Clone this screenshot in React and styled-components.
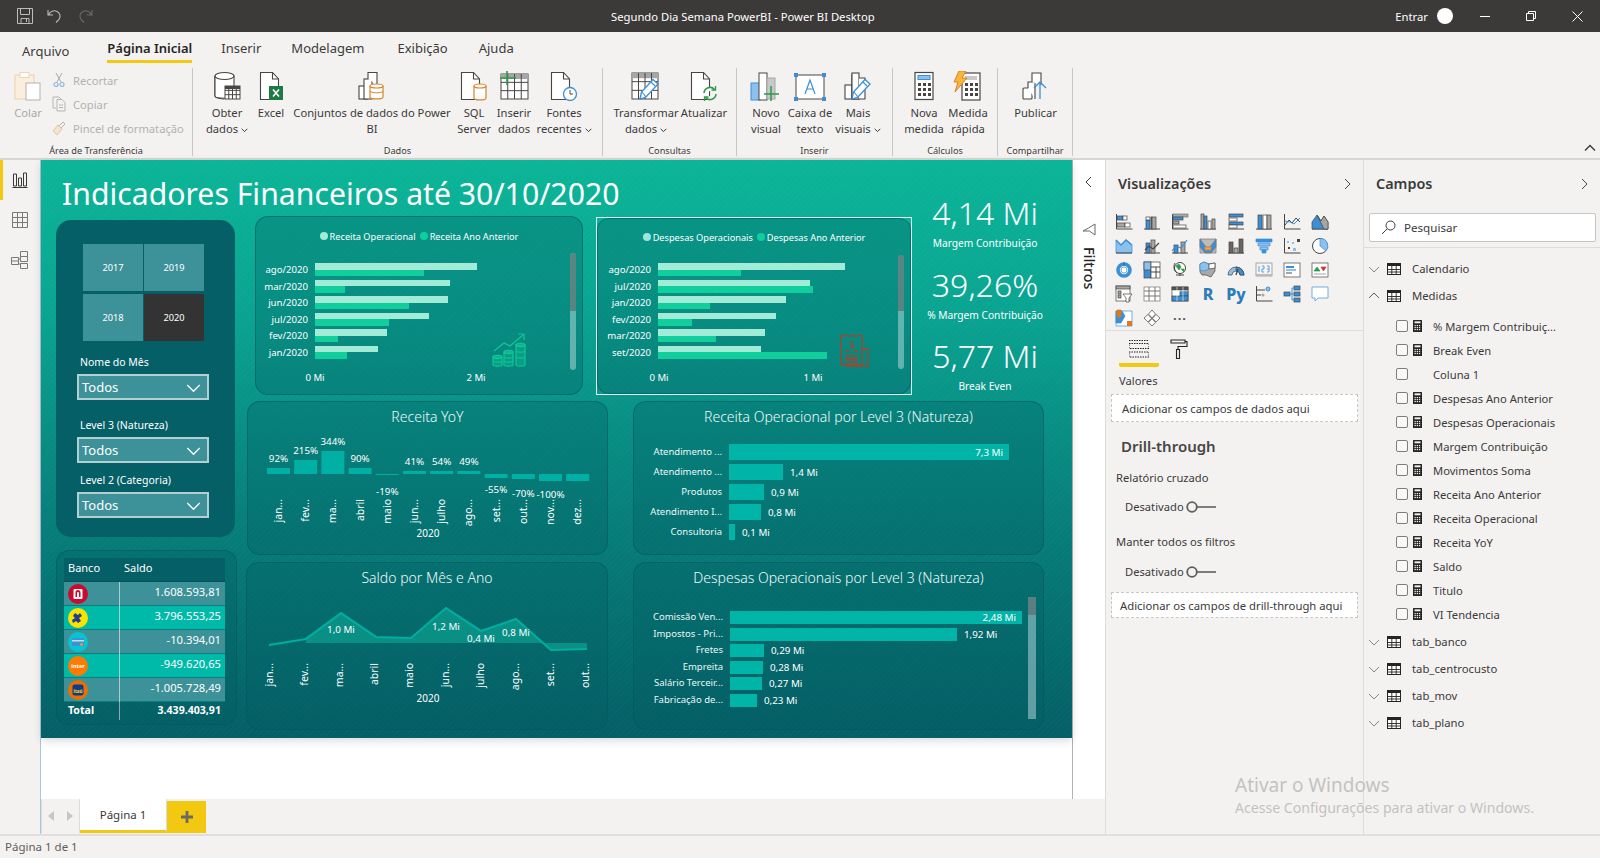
import React from 'react';
import styled, { createGlobalStyle } from 'styled-components';

const FONT = '"Noto Sans", "Open Sans", "Liberation Sans", sans-serif';

const Global = createGlobalStyle`
  html, body { margin: 0; padding: 0; background: #f3f2f1; }
  body { font-family: ${FONT}; overflow: hidden; }
  * { box-sizing: border-box; }
`;

const Page = styled.div`width:1600px;height:858px;display:flex;flex-direction:column;overflow:hidden;background:#f3f2f1;color:#252423;`;

/* ---------- title bar ---------- */
const TitleBar = styled.div`height:32px;flex:none;background:#3b3a39;color:#fff;display:flex;align-items:center;padding-left:17px;font-size:11.25px;`;
const QuickTools = styled.div`width:594px;display:flex;align-items:center;gap:14px;`;
const TitleText = styled.div`white-space:nowrap;`;
const TitleRight = styled.div`margin-left:auto;display:flex;align-items:center;`;
const Signin = styled.span`margin-right:9px;`;
const Avatar = styled.span`width:16px;height:16px;border-radius:50%;background:#fff;margin-right:9px;`;
const WinBtn = styled.span`width:46px;height:32px;display:flex;align-items:center;justify-content:center;`;

/* ---------- ribbon ---------- */
const Ribbon = styled.div`height:128px;flex:none;background:#f3f2f1;border-bottom:2px solid #d8d6d4;position:relative;`;
const TabRow = styled.div`height:36px;display:flex;padding-left:22px;font-size:13px;color:#3b3a39;`;
const RTab = styled.div`
  height:31px;line-height:${p=>p.$low?'38px':'32px'};white-space:nowrap;margin-right:${p=>p.$mr}px;
  ${p=>p.$active&&'font-weight:600;color:#252423;border-bottom:3px solid #f2c811;'}
`;
const GroupRow = styled.div`display:flex;height:88px;`;
const RGroup = styled.div`width:${p=>p.$w}px;flex:none;border-right:1px solid #c8c6c4;display:flex;flex-direction:column;padding-left:${p=>p.$pl||0}px;`;
const GroupBody = styled.div`height:77px;flex:none;display:flex;`;
const GroupLabel = styled.div`height:12px;line-height:12px;font-size:9.2px;text-align:center;color:#3b3a39;margin-left:${p=>-(p.$pl||0)}px;white-space:nowrap;`;
const RBtn = styled.div`width:${p=>p.$w}px;flex:none;display:flex;flex-direction:column;align-items:center;padding-top:3px;font-size:11.2px;line-height:16px;color:${p=>p.$off?'#a9a8a6':'#3b3a39'};text-align:center;`;
const RIcon = styled.div`height:30px;margin-bottom:4px;display:flex;justify-content:center;`;
const RLabel = styled.div`white-space:nowrap;`;
const SmallCol = styled.div`margin-left:9px;display:flex;flex-direction:column;`;
const SmallBtn = styled.div`height:24px;display:flex;align-items:center;gap:6px;font-size:11.2px;color:#b3b1af;white-space:nowrap;`;
const Caret = styled.svg`margin-left:3px;`;
const Collapse = styled.svg`position:absolute;right:4px;bottom:6px;`;

/* ---------- main ---------- */
const Main = styled.div`flex:1;display:flex;min-height:0;`;
const Rail = styled.div`width:41px;flex:none;background:#f3f2f1;border-right:1px solid #a9c4e4;display:flex;flex-direction:column;`;
const RailBtn = styled.div`height:40px;display:flex;align-items:center;justify-content:center;border-left:3px solid ${p=>p.$on?'#f2c811':'transparent'};padding-right:3px;`;
const Center = styled.div`width:1064px;flex:none;display:flex;flex-direction:column;`;
const ReportRow = styled.div`height:639px;display:flex;background:#fff;`;
const ReportCol = styled.div`width:1031px;flex:none;display:flex;flex-direction:column;`;
const Canvas = styled.div`
  height:578px;position:relative;color:#fff;overflow:hidden;box-shadow:0 3px 8px rgba(0,0,0,.14);
  background:
    repeating-linear-gradient(135deg,rgba(255,255,255,.018) 0 1px,transparent 1px 4px),
    linear-gradient(180deg,#0bb597 0%,#0aa592 25%,#077f7a 62%,#045f66 100%);
`;
const FilterPane = styled.div`width:33px;flex:none;border-left:1px solid #b4b2b0;background:#fff;display:flex;flex-direction:column;align-items:center;padding-top:16px;`;
const FilterWord = styled.div`writing-mode:vertical-rl;font-size:14.4px;font-weight:500;margin-top:10px;color:#252423;`;
const FilterFunnel = styled.svg`margin-top:35px;`;

const Visual = styled.div`position:absolute;left:${p=>p.$x-41}px;top:${p=>p.$y-160}px;width:${p=>p.$w}px;height:${p=>p.$h}px;`;
const Heading = styled.div`
  position:absolute;left:21px;top:11px;font-size:30.2px;line-height:46px;white-space:nowrap;font-weight:400;color:#fff;
`;
const Card = styled(Visual)`
  border-radius:13px;background:rgba(3,92,98,.32);border:1px solid rgba(3,88,95,.55);display:flex;flex-direction:column;
`;
const SelectFrame = styled(Visual)`border:1.5px solid #e4f4f1;`;
const SelectCard = styled.div`height:100%;border-radius:12px;background:rgba(3,92,98,.32);border:1px solid rgba(3,88,95,.55);position:relative;display:flex;flex-direction:column;`;
const CardTitle = styled.div`height:32px;flex:none;line-height:30px;text-align:center;font-size:14px;font-weight:300;color:#eefaf8;white-space:nowrap;`;
const Fill = styled.svg`display:block;flex:none;`;

/* slicer */
const SlicerPanel = styled(Visual)`background:#045f66;border-radius:15px;padding:24px 0 0 21px;`;
const Tiles = styled.div`display:grid;grid-template-columns:60px 60px;grid-auto-rows:47px;gap:3px 1px;margin-left:6px;margin-bottom:13px;`;
const Tile = styled.div`background:${p=>p.$on?'#333':'#3d9299'};color:#fff;display:flex;align-items:center;justify-content:center;font-size:9.2px;`;
const SlicerLabel = styled.div`font-size:10.5px;line-height:16px;color:#fff;margin:0 0 4px 3px;`;
const Drop = styled.div`width:132px;height:26px;border:2px solid #b5ced0;background:#3d9299;display:flex;align-items:center;justify-content:space-between;padding:0 6px 0 3px;font-size:13px;color:#fff;margin-bottom:${p=>p.$mb}px;`;

/* hbars */
const Legend = styled.div`height:14px;margin-top:${p=>p.$mt}px;flex:none;display:flex;justify-content:center;align-items:center;gap:4px;font-size:9.2px;color:#fff;white-space:nowrap;`;
const LegendItem = styled.span`display:flex;align-items:center;gap:2px;`;
const Dot = styled.i`width:8px;height:8px;border-radius:50%;background:${p=>p.$c};display:block;`;
const Rows = styled.div`margin-top:${p=>p.$mt}px;display:flex;flex-direction:column;gap:3.5px;`;
const DRow = styled.div`height:13px;display:flex;align-items:center;`;
const DLabel = styled.div`width:${p=>p.$w}px;text-align:right;font-size:9.6px;margin-right:7px;white-space:nowrap;flex:none;`;
const DBars = styled.div`display:flex;flex-direction:column;`;
const DBar = styled.div`height:6.5px;background:${p=>p.$c};`;
const Axis = styled.div`margin-top:${p=>p.$mt}px;padding-left:${p=>p.$pl}px;display:flex;font-size:9.6px;gap:${p=>p.$gap}px;`;
const AxisTick = styled.span`width:40px;text-align:center;`;
const Scroll = styled.div`position:absolute;left:${p=>p.$l}px;top:${p=>p.$t}px;width:${p=>p.$w||6}px;height:${p=>p.$h}px;border-radius:${p=>p.$r??3}px;background:rgba(190,220,220,.5);overflow:hidden;`;
const Thumb = styled.div`height:${p=>p.$h}px;background:rgba(90,115,118,.75);`;
const Corner = styled.div`position:absolute;left:${p=>p.$l}px;top:${p=>p.$t}px;`;

/* one-bar charts */
const BRows = styled.div`margin-top:${p=>p.$mt}px;display:flex;flex-direction:column;gap:${p=>p.$gap}px;`;
const BRow = styled.div`height:${p=>p.$h}px;display:flex;align-items:center;`;
const BLabel = styled.div`width:${p=>p.$w}px;flex:none;text-align:right;font-size:9.5px;margin-right:7px;padding-bottom:2px;white-space:nowrap;color:#e9f7f5;`;
const Bar = styled.div`height:100%;background:#00b5a8;display:flex;align-items:center;justify-content:flex-end;padding-right:6px;font-size:9.8px;white-space:nowrap;flex:none;`;
const BVal = styled.span`font-size:9.8px;margin-left:7px;white-space:nowrap;`;

/* KPI */
const KpiCol = styled(Visual)`display:flex;flex-direction:column;align-items:center;`;
const KpiValue = styled.div`font-size:32px;font-weight:300;line-height:45px;white-space:nowrap;margin:${p=>p.$mt}px 0 1px;`;
const KpiLabel = styled.div`font-size:10.2px;line-height:14px;white-space:nowrap;`;

/* bank table */
const BankCard = styled(Card)`padding:7px 0 0 7px;`;
const BankTable = styled.div`width:161px;font-size:11.2px;`;
const BankHead = styled.div`height:24px;background:#045f66;display:grid;grid-template-columns:56px 1fr;align-items:center;padding:0 0 5px 4px;font-size:11px;border-bottom:1px solid #03525a;`;
const BankRow = styled.div`height:24px;display:grid;grid-template-columns:56px 1fr;background:${p=>p.$alt?'#00baa9':'#3d9299'};border-bottom:1px solid #0a7d7e;`;
const LogoCell = styled.div`border-right:1px solid #a9cccd;display:flex;align-items:center;padding-left:4px;`;
const Amount = styled.div`text-align:right;padding:0 4px 5px 0;line-height:19px;`;
const BankTotal = styled.div`height:18px;display:grid;grid-template-columns:56px 1fr;font-weight:700;font-size:10.6px;line-height:17px;`;
const TotalName = styled.div`padding-left:4px;border-right:1px solid #8ab;`;
const TotalVal = styled.div`text-align:right;padding-right:4px;`;

/* tab bar */
const TabBar = styled.div`height:35px;flex:none;display:flex;background:#f3f2f1;align-items:flex-start;`;
const Arrows = styled.div`width:39px;height:34px;border-left:1px solid #dedcda;border-right:1px solid #dedcda;display:flex;align-items:center;justify-content:space-between;padding:0 6px;`;
const PageTab = styled.div`width:87px;height:34px;background:#fff;border-bottom:3px solid #f2c811;border-right:1px solid #dedcda;display:flex;align-items:center;justify-content:center;font-size:11.5px;color:#3b3a39;`;
const AddTab = styled.div`width:39px;height:32px;margin-top:2px;background:#f2c811;display:flex;align-items:center;justify-content:center;`;

/* viz pane */
const VizPane = styled.div`width:258px;flex:none;border-left:1px solid #dedcda;display:flex;flex-direction:column;position:relative;`;
const PaneHead = styled.div`height:50px;flex:none;display:flex;align-items:center;justify-content:space-between;padding:0 ${p=>p.$pr}px 3px ${p=>p.$pl}px;font-size:14.4px;font-weight:600;color:#3b3a39;`;
const VizGrid = styled.div`display:grid;grid-template-columns:repeat(8,28px);grid-auto-rows:24px;padding-left:4px;height:121px;border-bottom:1px solid #dedcda;flex:none;`;
const VizCell = styled.div`display:flex;align-items:center;justify-content:center;`;
const More = styled.div`color:#555;font-size:13px;letter-spacing:1px;line-height:14px;font-weight:700;`;
const Glyph = styled.div`color:#2b7cb9;font-weight:800;font-size:16px;line-height:18px;`;
const WellTabs = styled.div`height:36px;display:flex;padding-left:13px;flex:none;`;
const WellTab = styled.div`width:40px;height:36px;margin-right:${p=>p.$mr||0}px;display:flex;justify-content:center;padding-top:8px;border-bottom:${p=>p.$on?'4px solid #f2c811':'none'};border-radius:0 0 2px 2px;`;
const ValoresLabel = styled.div`font-size:11.2px;line-height:16px;margin:6px 0 5px 13px;color:#3b3a39;`;
const DropZone = styled.div`margin-left:5px;width:247px;height:${p=>p.$h}px;background:#fff;border:1px dashed #c8c6c4;display:flex;align-items:center;padding-left:${p=>p.$pl}px;font-size:11.3px;color:#3b3a39;white-space:nowrap;`;
const DrillTitle = styled.div`font-size:15px;font-weight:600;line-height:20px;margin:14px 0 14px 15px;color:#484644;`;
const SmallHead = styled.div`font-size:11.2px;line-height:16px;margin-left:10px;color:#3b3a39;`;
const ToggleRow = styled.div`display:flex;align-items:center;gap:2px;font-size:11.2px;line-height:16px;margin:${p=>p.$mt}px 0 ${p=>p.$mb}px 19px;color:#3b3a39;`;

/* fields */
const FieldsPane = styled.div`flex:1;border-left:1px solid #dedcda;display:flex;flex-direction:column;position:relative;`;
const SearchBox = styled.div`margin:3px 4px 0 5px;height:29px;background:#fff;border:1px solid #c8c6c4;border-radius:2px;display:flex;align-items:center;padding-left:11px;gap:8px;font-size:11.6px;color:#3b3a39;flex:none;`;
const PaneRule = styled.div`height:1px;background:#dedcda;margin-top:5px;flex:none;`;
const FieldList = styled.div`padding-top:7px;`;
const TableRow = styled.div`height:27px;display:flex;align-items:center;font-size:11.3px;color:#3b3a39;padding-left:4px;`;
const RowName = styled.span`margin-left:11px;`;
const Measures = styled.div`margin:5px 0 2px;`;
const MeasureRow = styled.div`height:24px;display:flex;align-items:center;padding-left:32px;font-size:11.2px;color:#3b3a39;white-space:nowrap;`;
const Check = styled.i`width:12px;height:12px;border:1px solid #7f7d7b;border-radius:2px;background:#f8f8f8;display:block;flex:none;`;
const CalcSlot = styled.span`width:10px;margin:0 10px 0 5px;display:block;flex:none;`;

const Watermark = styled.div`position:absolute;left:-129px;top:612px;color:#c3c2c0;white-space:nowrap;font-size:14.1px;line-height:18px;`;
const WatermarkBig = styled.div`font-size:19px;line-height:27px;`;

const Status = styled.div`height:24px;flex:none;border-top:2px solid #e1dfdd;font-size:11.5px;line-height:22px;padding-left:5px;color:#605e5c;`;

/* ---------- icons ---------- */
const K = '#484644', BL = '#3a8fd6', BLL = '#8dc0ee', GR = '#a6a6a6', OR = '#d9822b', GN = '#2c9a4b';
const Ic = ({ w = 30, h = 30, vb, children }) => <svg width={w} height={h} viewBox={vb || `0 0 ${w} ${h}`} fill="none" style={{display:'block'}}>{children}</svg>;
const Doc = ({ x = 0 }) => <g stroke={K} strokeWidth="1.1" fill="#fff"><path d={`M${x+4.5} 1.5h12l6 6.5v20.5h-18z`}/><path d={`M${x+16.5} 1.5v6.5h6`} fill="none"/></g>;
const Cyl = ({ x, y, w, h, c }) => <g stroke={c} strokeWidth="1.2" fill="#fff"><path d={`M${x} ${y+2}v${h-4}c0 2.6 ${w} 2.6 ${w} 0v-${h-4}`}/><ellipse cx={x+w/2} cy={y+2} rx={w/2} ry="2"/></g>;
const Tbl = ({ x, y, w, h, c = K, head }) => {
  const v=[1,2,3].map(i=>x+i*w/4), s=[1,2].map(i=>y+i*h/3);
  return <g stroke={c} strokeWidth="1" fill="none"><rect x={x} y={y} width={w} height={h} fill="#fff"/>{head&&<rect x={x} y={y} width={w} height={h/5} fill={GR} stroke="none"/>}{v.map(a=><path key={a} d={`M${a} ${y}v${h}`}/>)}{s.map(a=><path key={a} d={`M${x} ${a}h${w}`}/>)}</g>;
};
const Bars3 = () => <g stroke={K} strokeWidth="1.1" fill="#fff"><rect x="3" y="14" width="7" height="14"/><rect x="10" y="8" width="7" height="20"/><path d="M17 3.5h-7v5"/><rect x="10" y="2" width="7" height="26"/><path d="M17 7h6v21h-6"/></g>;
const Pencil = () => <g><path d="M10 28l1.5-7L23 8.5l5 4.5L16 26z" fill="#fff" stroke={BL} strokeWidth="1.3"/><path d="M12 21l4 5M21 11l4 4" stroke={BL} strokeWidth="1.1"/></g>;

const RibbonIcons = {
  colar: <Ic><rect x="2" y="4" width="19" height="24" fill="#fbeedd" stroke="#eed5b3" strokeWidth="1.2"/><rect x="7" y="1.5" width="9" height="5" fill="#fff" stroke="#eed5b3"/><rect x="13" y="12" width="14" height="17" fill="#fff" stroke="#b9b8b6" strokeWidth="1.1"/></Ic>,
  obter: <Ic><path d="M3 5v20c0 2 7 3 9 3" stroke={K} strokeWidth="1.1" fill="#fff"/><path d="M3 5v20c0 3 18 3 19 0V5z" fill="#fff" stroke={K} strokeWidth="1.1"/><ellipse cx="12.5" cy="5" rx="9.5" ry="3.5" fill="#fff" stroke={K} strokeWidth="1.1"/><Tbl x={13} y={15} w={15} h={13}/><rect x="13" y="15" width="15" height="3" fill={K}/></Ic>,
  excel: <Ic w={30}><Doc/><rect x="13" y="15" width="14" height="14" fill="#1e7a45"/><path d="M17 18.5l6 7M23 18.5l-6 7" stroke="#fff" strokeWidth="1.6"/></Ic>,
  conj: <Ic w={30}><g stroke={K} strokeWidth="1.1" fill="#fff"><rect x="2" y="15" width="8" height="13"/><rect x="7" y="8" width="8" height="20"/><path d="M11 8V1.5h9v12"/></g><Cyl x={13} y={13} w={13} h={15} c={OR}/><path d="M13 20c0 2.4 13 2.4 13 0" stroke={OR} strokeWidth="1"/></Ic>,
  sql: <Ic w={30}><Doc x={-2}/><Cyl x={15} y={13} w={12} h={16} c={OR}/></Ic>,
  inserir: <Ic w={32}><Tbl x={3} y={3} w={27} h={25} head/><path d="M9 0v14M2 7h16" stroke={GN} strokeWidth="1.6"/></Ic>,
  fontes: <Ic w={30}><Doc x={-2}/><circle cx="21" cy="23" r="6.5" fill="#fff" stroke={BL} strokeWidth="1.3"/><path d="M21 19v4h3" stroke={K}/></Ic>,
  transf: <Ic w={32}><Tbl x={2} y={2} w={26} h={26} head/><Pencil/></Ic>,
  atual: <Ic w={30}><Doc x={-2}/><path d="M15 22a6 6 0 0 1 10.5-3.5M27 23a6 6 0 0 1-10.5 3.5" stroke={GN} strokeWidth="1.6" fill="#fff"/><path d="M26.5 15v4h-4M15.5 30v-4h4" stroke={GN} strokeWidth="1.3"/></Ic>,
  novo: <Ic w={32}><rect x="1" y="12" width="9" height="17" fill={BLL} stroke={BL}/><rect x="9" y="2" width="8" height="27" fill="#fff" stroke={K}/><rect x="17" y="7" width="8" height="21" fill="#c8c8c8" stroke={GR}/><path d="M21 15v15M14 23h15" stroke={GN} strokeWidth="1.5"/></Ic>,
  caixa: <Ic w={32}><rect x="2" y="4" width="28" height="24" fill="#fff" stroke={K}/><g fill={BL}><rect x="0" y="2" width="4" height="4"/><rect x="28" y="2" width="4" height="4"/><rect x="0" y="26" width="4" height="4"/><rect x="28" y="26" width="4" height="4"/></g><path d="M11 23l5-14 5 14M12.8 18h6.4" stroke={BL} strokeWidth="1.2"/></Ic>,
  mais: <Ic w={32}><Bars3/><Pencil/></Ic>,
  calc: <Ic w={22}><rect x="2" y="1.5" width="18" height="27" fill="#fff" stroke={K} strokeWidth="1.2"/><rect x="5" y="4.5" width="12" height="4" fill={BLL} stroke={BL}/><g fill={K}>{[12,17,22].flatMap(y=>[5,10,15].map(x=><rect key={x+'-'+y} x={x} y={y} width="3" height="3"/>))}</g></Ic>,
  rapida: <Ic w={32}><rect x="10" y="2" width="18" height="27" fill="#fff" stroke={K} strokeWidth="1.2"/><rect x="13" y="5" width="12" height="4" fill="#c8c8c8"/><g fill={K}>{[12,17,22].flatMap(y=>[13,18,23].map(x=><rect key={x+'-'+y} x={x} y={y} width="3" height="3"/>))}</g><path d="M7 0h7l-4 7h5L3 21l3-10H2z" fill="#f6b73c" stroke={OR}/></Ic>,
  pub: <Ic w={30}><g stroke={K} strokeWidth="1.1" fill="#fff"><rect x="2" y="17" width="9" height="11" rx="1"/><path d="M7 17v-6h7v17"/><path d="M11 11V2h9v12"/></g><path d="M19 28V11M13 17l6-6 6 6" stroke={BL} strokeWidth="1.3"/></Ic>,
};

const Chev = ({ d = 'r', s = 12, c = '#484644' }) => {
  const p = { r:'M4 1l5 5-5 5', l:'M8 1L3 6l5 5', d:'M1 4l5 5 5-5', u:'M1 8l5-5 5 5' }[d];
  return <svg width={s} height={s} viewBox="0 0 12 12" fill="none" style={{display:'block',flex:'none'}}><path d={p} stroke={c} strokeWidth="1"/></svg>;
};
const Small = ({ children }) => <svg width="15" height="16" viewBox="0 0 15 16" fill="none" style={{display:'block',flex:'none'}}>{children}</svg>;
const DownCaret = () => <Caret width="7" height="5" viewBox="0 0 7 5" fill="none"><path d="M.7.8l2.8 2.8L6.3.8" stroke="#3b3a39" strokeWidth="1"/></Caret>;

/* 18x18 visual pane glyphs */
const R = (x,y,w,h,f=BL,s=K) => <rect key={`${x}${y}${w}${h}${f}`} x={x} y={y} width={w} height={h} fill={f} stroke={s} strokeWidth=".7"/>;
const AX = <path key="ax" d="M1.5 1v15h16" stroke={K} strokeWidth="1" fill="none"/>;
const BASE = <path key="bs" d="M1 16h16" stroke={K} strokeWidth="1" fill="none"/>;
const LN = (d,c=K,w=1) => <path key={d+c} d={d} stroke={c} strokeWidth={w} fill="none"/>;
const P = (d,f=BL,s=K) => <path key={d+f} d={d} fill={f} stroke={s} strokeWidth=".7"/>;
const VIZ = [
  [AX,R(2,3,6,4),R(8,3,4,4,'#fff'),R(2,10,8,4,GR),R(10,10,5,4,'#fff')],
  [BASE,R(3,7,4,9),R(8,4,1,12,BL),R(9,4,4,12,GR),R(3,4,4,3,'#fff')],
  [AX,R(2,1,15,3,GR,'#777'),R(2,4,10,3,BL),R(2,8,6,3,GR),R(2,12,13,3,'#fff')],
  [BASE,R(2,1,3,15,GR),R(5,3,3,13,BL),R(9,8,3,8,'#fff'),R(13,6,3,10,GR)],
  [BASE,R(2,1,14,3,BL),R(2,5,8,3,'#fff'),R(2,9,14,3,BL),R(2,12,8,3,'#fff')],
  [BASE,R(3,2,4,14),R(8,2,4,14,'#fff'),R(12,2,4,14,GR)],
  [AX,LN('M2 12l4-5 3 3 4-5 4 4',K),LN('M2 8l5 1 4 2 6-6',BL)],
  [BASE,P('M1 16V9l5-7 4 6 3-5 4 6v7z',BL),P('M6 2l4 6 3-5 4 6v7h-4z',GR)],
  [P('M1 3l5 5 5-5 6 5v8H1z',BLL,BL),LN('M1 3l5 5 5-5 6 5',BL,1.4),BASE],
  [BASE,R(3,6,4,10),R(8,3,4,13,GR),LN('M2 13l4-4 4 3 6-6',K,1.2)],
  [BASE,R(3,8,4,8),R(10,5,4,11,GR),LN('M1 14l4-5 5 2 6-8',BL,1.2)],
  [P('M1 2h16v14H1z','#bcbcbc','#777'),P('M1 2l6 8h4l6-8v8l-5 6H6l-5-6z',BL,'#777'),R(6,10,6,3,'#f3a13c','#d9822b')],
  [BASE,R(2,5,4,11,'#666'),R(7,11,4,5,GR),R(12,2,4,14,'#666')],
  [P('M1 2h16v3H1z',BL,BL),P('M3 6h12v3H3z',BLL,BL),P('M5 10h8v3H5z',BLL,BL),P('M7 13h4v3H7z',BL,BL)],
  [AX,R(5,10,2,2,K,'none'),R(9,5,2,2,BLL,'none'),R(10,11,3,3,BLL,'none'),R(14,2,3,3,K,'none'),R(4,4,2,2,BLL,'none')],
  [<circle key="c" cx="9" cy="9" r="7.5" fill="#fff" stroke={K} strokeWidth="1"/>,P('M9 9V1.5A7.5 7.5 0 0 1 15 14z',BLL,BL)],
  [<circle key="c" cx="9" cy="9" r="6" fill="none" stroke={BL} strokeWidth="3.6"/>,LN('M9 1v4',K,.7),<circle key="d" cx="9" cy="9" r="3" fill="#fff" stroke={BL} strokeWidth=".7"/>],
  [R(1,1,7,16),R(1,1,7,8,BLL),R(8,1,9,16,'#fff'),LN('M8 6h9M13 6v11M8 11h9')],
  [<circle key="g" cx="9" cy="7" r="5.5" fill="#fff" stroke={K} strokeWidth="1"/>,P('M5 5l3-2 2 3-2 3zM10 8l3 0 0 3z',GN,GN),LN('M5 14h8M9 12v3M4 2c-2 4-1 8 2 10',K)],
  [P('M1 3l4-2 5 2 6-1v8l-4 6-5-2-4 0L1 11z','#a8a8a8',K),P('M1 3l4-2 5 2v5l-5 2-4-1z',BLL,BL),P('M10 3l6-1v5l-6 1z','#fff',K)],
  [P('M1 14a8 8 0 0 1 16 0h-4a4 4 0 0 0-8 0z',BLL,K),P('M9 6a8 8 0 0 1 8 8h-4a4 4 0 0 0-4-4z',BL,K),LN('M9 14l2-6',K,1.3)],
  [R(1,2,16,13,'#f4f4f4','#888'),<rect key="b" x="1" y="13" width="16" height="2" fill="#bbb"/>,LN('M4 5v6M7 5h2v3H7v3h2M12 5h2v6h-2M12 8h2',BL,.8)],
  [R(1,2,16,14,'#fff',K),R(3,5,8,2,BL,'none'),R(3,8,10,2,BLL,'none'),R(3,11,6,2,GR,'none')],
  [R(1,2,16,14,'#fff',K),P('M3 10l3-4 3 4z',GN,GN),P('M10 6h5l-2.5 4z','#d13438','#d13438'),LN('M3 13h12',GR,1)],
  [R(1,1,14,15,'#fff',K),R(1,1,14,3,GR,K),R(3,6,3,3,GR,K),R(3,10,3,3,GR,K),P('M8 9h9l-3 4v4h-3v-4z','#fff',K)],
  [R(1,2,16,14,'#fff','#777'),LN('M1 6h16M1 11h16M6 2v14M12 2v14','#777')],
  [R(1,2,16,14,'#fff','#444'),R(1,2,16,3,'#555','#444'),R(9,6,8,5),R(1,11,16,5),LN('M1 6h16M6 2v14M12 2v14','#fff',.6)],
  null, null,
  [AX,LN('M2 5h8',K,1),<circle key="a" cx="13" cy="4" r="2" fill={BLL} stroke={BL}/>,LN('M2 10h4',K,1),<circle key="b" cx="8" cy="10" r="1.5" fill={GR}/>],
  [R(1,7,6,4),R(11,1,6,4),R(11,7,6,4),R(11,13,6,4),LN('M7 9h4M9 3v12M9 3h2M9 15h2',BL,1)],
  [P('M1 2h16v11H7l-3 3v-3H1z','#fff',BL)],
  [P('M1 2h16v15H1z','#fff',BL),P('M1 2h6l3 5-4 7H1z',BL,BL),P('M2 1h4v6l-2 2-2-2z','#e0791d','#e0791d'),R(12,12,5,5,'#e0791d','none')],
  [P('M9 1l3.5 4L9 9 5.5 5z','#fff',K),P('M5 5.5L8.5 9.3 5 13 1 9z','#fff',K),P('M13 5.5l4 3.5-4 4-3.5-3.7z','#fff',K),P('M9 9.7l3.5 3.7L9 17l-3.5-3.6z','#fff',K)],
];
const VizIcon = ({ i }) => {
  if (i === 27) return <Glyph>R</Glyph>;
  if (i === 28) return <Glyph>Py</Glyph>;
  return <svg width="18" height="18" viewBox="0 0 18 18">{VIZ[i]}</svg>;
};

const TableGlyph = () => <svg width="14" height="12" viewBox="0 0 14 12" style={{display:'block',flex:'none',marginLeft:7}}><rect x=".5" y=".5" width="13" height="11" fill="#fff" stroke="#252423"/><rect x="0" y="0" width="14" height="3" fill="#252423"/><path d="M4.8 0v12M9.2 0v12M0 6.5h14M0 9h14" stroke="#252423" strokeWidth=".9"/></svg>;
const CalcGlyph = () => <svg width="9" height="12" viewBox="0 0 9 12" style={{display:'block'}}><rect width="9" height="12" rx=".5" fill="#252423"/><rect x="1.5" y="1.3" width="6" height="2" fill="#eee"/><g fill="#eee">{[5,7,9].flatMap(y=>[1.5,3.7,5.9].map(x=><rect key={x+'_'+y} x={x} y={y} width="1.3" height="1.2"/>))}</g></svg>;
const Toggle = () => <svg width="32" height="12" viewBox="0 0 32 12"><circle cx="6" cy="6" r="4.8" fill="none" stroke="#605e5c" strokeWidth="1.8"/><path d="M11 6h19" stroke="#605e5c" strokeWidth="1.6"/></svg>;

const CoinIcon = () => <svg width="34" height="34" viewBox="0 0 34 34" fill="none" stroke="#0fc796" strokeWidth="1.2"><path d="M2 18L12 10l6 3L31 2M26 1h6v6"/><g fill="rgba(15,199,150,.35)"><path d="M1 24v8c0 1.5 9 1.5 9 0v-8zM12 19v13c0 1.5 9 1.5 9 0V19zM24 12v20c0 1.5 9 1.5 9 0V12z"/><ellipse cx="5.5" cy="24" rx="4.5" ry="1.6"/><ellipse cx="16.5" cy="19" rx="4.5" ry="1.6"/><ellipse cx="28.5" cy="12" rx="4.5" ry="1.6"/></g><path d="M1 28c0 1.5 9 1.5 9 0M12 24c0 1.5 9 1.5 9 0M12 28c0 1.5 9 1.5 9 0M24 18c0 1.5 9 1.5 9 0M24 24c0 1.5 9 1.5 9 0"/></svg>;
const ReceiptIcon = () => <svg width="30" height="34" viewBox="0 0 30 34" fill="none" stroke="#a9432a" strokeWidth="1.3"><path d="M1 32V2l3 1.5L7 2l3 1.5L13 2l3 1.5L19 2l3 1v29z"/><path d="M22 16h6v17H7v-1M5 18h4M14 18h4M5 23h13M5 26h13M5 29h13"/><path d="M14 10c-2-2-4-1-4 .5s4 1.500 4 3-2.500 2-4 .5M12 7.500v10" strokeWidth="1"/></svg>;

const bankLogos = [
  <svg key="a" width="20" height="20" viewBox="0 0 20 20"><circle cx="10" cy="10" r="10" fill="#cc092f"/><rect x="5.500" y="5" width="9" height="10" rx="1" fill="#fff"/><path d="M7.500 13V8.500a2.500 2.500 0 0 1 5 0V13h-1.500V9a1 1 0 0 0-2 0v4z" fill="#cc092f"/></svg>,
  <svg key="b" width="20" height="20" viewBox="0 0 20 20"><circle cx="10" cy="10" r="10" fill="#fbe300"/><path d="M7 5l3 2 2-2 2 3-3 2 2 3-3 2-2-2-3 2-1-3 3-2-2-2z" fill="#20408f"/></svg>,
  <svg key="c" width="20" height="20" viewBox="0 0 20 20"><circle cx="10" cy="10" r="10" fill="#07c4d0"/><rect x="4" y="6" width="12" height="8" rx="1" fill="#3f90d6"/><rect x="4" y="8" width="12" height="1.500" fill="#bfe3f5"/><rect x="12" y="11.500" width="3" height="2" fill="#f29b3a"/></svg>,
  <svg key="d" width="20" height="20" viewBox="0 0 20 20"><circle cx="10" cy="10" r="10" fill="#ff7a00"/><text x="10" y="12" textAnchor="middle" fontSize="5.500" fill="#fff" fontFamily={FONT} fontWeight="700">inter</text></svg>,
  <svg key="e" width="20" height="20" viewBox="0 0 20 20"><circle cx="10" cy="10" r="10" fill="#ec7000"/><rect x="4.500" y="4.500" width="11" height="11" rx="2" fill="#123a8a"/><text x="10" y="13" textAnchor="middle" fontSize="4.500" fill="#fbe300" fontFamily={FONT} fontWeight="700">itaú</text></svg>,
];

/* ---------- data ---------- */
const LIGHT = '#a2ecd7', DARK = '#10cf9c', LIGHT2 = '#9be5dc';
const chart1 = [['ago/2020',162,109],['mar/2020',135,30],['jun/2020',133,94],['jul/2020',114,74],['fev/2020',72,23],['jan/2020',63,32]];
const chart2 = [['ago/2020',187,83],['jul/2020',152,155],['jan/2020',128,52],['fev/2020',118,34],['mar/2020',107,58],['set/2020',103,169]];
const natureza = [['Atendimento ...',280,'7,3 Mi',true],['Atendimento ...',54,'1,4 Mi'],['Produtos',35,'0,9 Mi'],['Atendimento I...',32,'0,8 Mi'],['Consultoria',2,'0,1 Mi']];
const despesas = [['Comissão Ven...',292,'2,48 Mi',true],['Impostos - Pri...',227,'1,92 Mi'],['Fretes',34,'0,29 Mi'],['Empreita',33,'0,28 Mi'],['Salário Terceir...',32,'0,27 Mi'],['Fabricação de...',27,'0,23 Mi']];
const banks = ['1.608.593,81','3.796.553,25','-10.394,01','-949.620,65','-1.005.728,49'];
const fields = ['% Margem Contribuiç...','Break Even','Coluna 1','Despesas Ano Anterior','Despesas Operacionais','Margem Contribuição','Movimentos Soma','Receita Ano Anterior','Receita Operacional','Receita YoY','Saldo','Titulo','VI Tendencia'];
const yoy = [['jan...',6,'92%',-1],['fev...',14,'215%',-1],['ma...',23,'344%',-1],['abril',6,'90%',-1],['maio',1,'-19%',14],['jun...',3,'41%',-1],['julho',3,'54%',-1],['ago...',3,'49%',-1],['set...',4,'-55%',12],['out...',5,'-70%',16],['nov...',7,'-100%',17],['dez...',7,'',0]];
const linePts = [[269,645],[306,639],[341,613],[376,637],[411,638],[446,608],[481,631],[516,619],[551,650],[587,649]];
const lineLabels = ['jan...','fev...','ma...','abril','maio','jun...','julho','ago...','set...','out...'];

const TxtProps = { fill:'#fff', fontFamily:FONT };

const DoubleBars = ({ rows, labelW, mt }) => (
  <Rows $mt={mt}>
    {rows.map(([n,a,b])=>(
      <DRow key={n}>
        <DLabel $w={labelW}>{n}</DLabel>
        <DBars><DBar style={{width:a}} $c={LIGHT}/><DBar style={{width:b}} $c={DARK}/></DBars>
      </DRow>
    ))}
  </Rows>
);
const SingleBars = ({ rows, labelW, h, gap, mt }) => (
  <BRows $mt={mt} $gap={gap}>
    {rows.map(([n,w,v,inside],i)=>(
      <BRow key={n+i} $h={h}>
        <BLabel $w={labelW}>{n}</BLabel>
        <Bar style={{width:w}}>{inside&&v}</Bar>
        {!inside&&<BVal>{v}</BVal>}
      </BRow>
    ))}
  </BRows>
);

export default function App(){
  return (
    <Page>
      <Global/>
      <TitleBar>
        <QuickTools>
          <svg width="16" height="16" viewBox="0 0 16 16" fill="none" stroke="#bdbcbb"><path d="M.5.5h15v15H.5zM3.500.5v6h9v-6M4 15.500v-5h8v5M9.500 11v3"/></svg>
          <svg width="16" height="16" viewBox="0 0 16 16" fill="none" stroke="#bdbcbb" strokeWidth="1.1"><path d="M1 2v5h5M1.500 7C3 3 7 2 10 3.500s4 5 2 8l-3 3"/></svg>
          <svg width="16" height="16" viewBox="0 0 16 16" fill="none" stroke="#6b6a69" strokeWidth="1.1"><path d="M15 2v5h-5M14.500 7C13 3 9 2 6 3.500s-4 5-2 8l3 3"/></svg>
        </QuickTools>
        <TitleText>Segundo Dia Semana PowerBI - Power BI Desktop</TitleText>
        <TitleRight>
          <Signin>Entrar</Signin><Avatar/>
          <WinBtn><svg width="10" height="10"><path d="M0 5.500h10" stroke="#fff"/></svg></WinBtn>
          <WinBtn><svg width="10" height="10" fill="none" stroke="#fff"><path d="M.5 2.500h7v7h-7zM2.500 2.500v-2h7v7h-2"/></svg></WinBtn>
          <WinBtn><svg width="11" height="11" stroke="#fff"><path d="M.5.5l10 10M10.500.5l-10 10"/></svg></WinBtn>
        </TitleRight>
      </TitleBar>

      <Ribbon>
        <TabRow>
          <RTab $low $mr={38}>Arquivo</RTab>
          <RTab $active $mr={29}>Página Inicial</RTab>
          <RTab $mr={30}>Inserir</RTab>
          <RTab $mr={33}>Modelagem</RTab>
          <RTab $mr={31}>Exibição</RTab>
          <RTab>Ajuda</RTab>
        </TabRow>
        <GroupRow>
          <RGroup $w={193} $pl={13}>
            <GroupBody>
              <RBtn $w={30} $off><RIcon>{RibbonIcons.colar}</RIcon><RLabel>Colar</RLabel></RBtn>
              <SmallCol>
                <SmallBtn><Small><path d="M4 1l5 9M10 1L5 10" stroke="#aaa"/><circle cx="4" cy="12.500" r="2" stroke="#8db6dc" strokeWidth="1.200"/><circle cx="10" cy="12.500" r="2" stroke="#8db6dc" strokeWidth="1.200"/></Small>Recortar</SmallBtn>
                <SmallBtn><Small><path d="M4 12H1V1h6l2 2M5 3.500h5l3 3V15H5z" stroke="#b5b5b5"/><path d="M7 9h4M7 11.500h4" stroke="#b5b5b5"/></Small>Copiar</SmallBtn>
                <SmallBtn><Small><path d="M7 6l4-4 2 2-4 4" stroke="#b5b5b5"/><path d="M1 11l5-6 4 4-5 6z" fill="#f4e4cd" stroke="#e4c79f"/></Small>Pincel de formatação</SmallBtn>
              </SmallCol>
            </GroupBody>
            <GroupLabel $pl={13}>Área de Transferência</GroupLabel>
          </RGroup>
          <RGroup $w={410} $pl={7}>
            <GroupBody>
              <RBtn $w={54}><RIcon>{RibbonIcons.obter}</RIcon><RLabel>Obter</RLabel><RLabel>dados<DownCaret/></RLabel></RBtn>
              <RBtn $w={34}><RIcon>{RibbonIcons.excel}</RIcon><RLabel>Excel</RLabel></RBtn>
              <RBtn $w={168}><RIcon>{RibbonIcons.conj}</RIcon><RLabel>Conjuntos de dados do Power</RLabel><RLabel>BI</RLabel></RBtn>
              <RBtn $w={36}><RIcon>{RibbonIcons.sql}</RIcon><RLabel>SQL</RLabel><RLabel>Server</RLabel></RBtn>
              <RBtn $w={44}><RIcon>{RibbonIcons.inserir}</RIcon><RLabel>Inserir</RLabel><RLabel>dados</RLabel></RBtn>
              <RBtn $w={56}><RIcon>{RibbonIcons.fontes}</RIcon><RLabel>Fontes</RLabel><RLabel>recentes<DownCaret/></RLabel></RBtn>
            </GroupBody>
            <GroupLabel $pl={7}>Dados</GroupLabel>
          </RGroup>
          <RGroup $w={134} $pl={10}>
            <GroupBody>
              <RBtn $w={66}><RIcon>{RibbonIcons.transf}</RIcon><RLabel>Transformar</RLabel><RLabel>dados<DownCaret/></RLabel></RBtn>
              <RBtn $w={50}><RIcon>{RibbonIcons.atual}</RIcon><RLabel>Atualizar</RLabel></RBtn>
            </GroupBody>
            <GroupLabel $pl={10}>Consultas</GroupLabel>
          </RGroup>
          <RGroup $w={156} $pl={12}>
            <GroupBody>
              <RBtn $w={34}><RIcon>{RibbonIcons.novo}</RIcon><RLabel>Novo</RLabel><RLabel>visual</RLabel></RBtn>
              <RBtn $w={54}><RIcon>{RibbonIcons.caixa}</RIcon><RLabel>Caixa de</RLabel><RLabel>texto</RLabel></RBtn>
              <RBtn $w={42}><RIcon>{RibbonIcons.mais}</RIcon><RLabel>Mais</RLabel><RLabel>visuais<DownCaret/></RLabel></RBtn>
            </GroupBody>
            <GroupLabel $pl={12}>Inserir</GroupLabel>
          </RGroup>
          <RGroup $w={105} $pl={11}>
            <GroupBody>
              <RBtn $w={40}><RIcon>{RibbonIcons.calc}</RIcon><RLabel>Nova</RLabel><RLabel>medida</RLabel></RBtn>
              <RBtn $w={48}><RIcon>{RibbonIcons.rapida}</RIcon><RLabel>Medida</RLabel><RLabel>rápida</RLabel></RBtn>
            </GroupBody>
            <GroupLabel $pl={11}>Cálculos</GroupLabel>
          </RGroup>
          <RGroup $w={75}>
            <GroupBody>
              <RBtn $w={75}><RIcon>{RibbonIcons.pub}</RIcon><RLabel>Publicar</RLabel></RBtn>
            </GroupBody>
            <GroupLabel>Compartilhar</GroupLabel>
          </RGroup>
        </GroupRow>
        <Collapse width="12" height="8" viewBox="0 0 12 8" fill="none"><path d="M1 6.500l5-5 5 5" stroke="#3b3a39" strokeWidth="1.400"/></Collapse>
      </Ribbon>

      <Main>
        <Rail>
          <RailBtn $on><svg width="16" height="18" viewBox="0 0 16 18" fill="none" stroke="#3b3a39"><path d="M.5 16.500h15M1.500 3v12h3V3zM6.500 7v8h3V7zM11.500 2v13h3V2z"/></svg></RailBtn>
          <RailBtn><svg width="16" height="16" viewBox="0 0 16 16" fill="none" stroke="#7b7977"><path d="M.5.5h15v15H.5zM.5 5.500h15M.5 10.500h15M5.500.5v15M10.500.5v15"/></svg></RailBtn>
          <RailBtn><svg width="18" height="18" viewBox="0 0 18 18" fill="none" stroke="#7b7977"><path d="M.5 6.500h7v7h-7zM9.500.5h7v5h-7zM9.500 5.500h7v5h-7zM9.500 12.500h7v5h-7zM.5 10h7M7.500 8h2M7.500 13h2M9.500 8v-2"/></svg></RailBtn>
        </Rail>

        <Center>
          <ReportRow>
            <ReportCol>
              <Canvas>
                <Heading>Indicadores Financeiros até 30/10/2020</Heading>

                <SlicerPanel $x={56} $y={220} $w={179} $h={317}>
                  <Tiles>
                    <Tile>2017</Tile><Tile>2019</Tile><Tile>2018</Tile><Tile $on>2020</Tile>
                  </Tiles>
                  <SlicerLabel>Nome do Mês</SlicerLabel>
                  <Drop $mb={17}>Todos<Chev d="d" s={15} c="#fff"/></Drop>
                  <SlicerLabel>Level 3 (Natureza)</SlicerLabel>
                  <Drop $mb={9}>Todos<Chev d="d" s={15} c="#fff"/></Drop>
                  <SlicerLabel>Level 2 (Categoria)</SlicerLabel>
                  <Drop $mb={0}>Todos<Chev d="d" s={15} c="#fff"/></Drop>
                </SlicerPanel>

                <Card $x={255} $y={216} $w={328} $h={179}>
                  <Legend $mt={12}>
                    <LegendItem><Dot $c={LIGHT}/>Receita Operacional</LegendItem>
                    <LegendItem><Dot $c={DARK}/>Receita Ano Anterior</LegendItem>
                  </Legend>
                  <DoubleBars rows={chart1} labelW={52} mt={20}/>
                  <Axis $mt={12} $pl={39} $gap={121}><AxisTick>0 Mi</AxisTick><AxisTick>2 Mi</AxisTick></Axis>
                  <Scroll $l={314} $t={36} $h={117}><Thumb $h={58}/></Scroll>
                  <Corner $l={236} $t={116}><CoinIcon/></Corner>
                </Card>

                <SelectFrame $x={596} $y={217} $w={316} $h={178}>
                  <SelectCard>
                    <Legend $mt={11}>
                      <LegendItem><Dot $c={LIGHT2}/>Despesas Operacionais</LegendItem>
                      <LegendItem><Dot $c={DARK}/>Despesas Ano Anterior</LegendItem>
                    </Legend>
                    <DoubleBars rows={chart2} labelW={53} mt={19}/>
                    <Axis $mt={12} $pl={41} $gap={114}><AxisTick>0 Mi</AxisTick><AxisTick>1 Mi</AxisTick></Axis>
                    <Scroll $l={300} $t={36} $h={114}><Thumb $h={56}/></Scroll>
                    <Corner $l={242} $t={114}><ReceiptIcon/></Corner>
                  </SelectCard>
                </SelectFrame>

                <KpiCol $x={905} $y={190} $w={160} $h={207}>
                  <KpiValue $mt={0}>4,14 Mi</KpiValue>
                  <KpiLabel>Margem Contribuição</KpiLabel>
                  <KpiValue $mt={12}>39,26%</KpiValue>
                  <KpiLabel>% Margem Contribuição</KpiLabel>
                  <KpiValue $mt={11}>5,77 Mi</KpiValue>
                  <KpiLabel>Break Even</KpiLabel>
                </KpiCol>

                <Card $x={247} $y={401} $w={361} $h={154}>
                  <CardTitle>Receita YoY</CardTitle>
                  <Fill width="359" height="120" viewBox="248 434 359 120">
                    {yoy.map(([n,h,l,o],i)=>{
                      const x=267+i*27.2;
                      const neg=o>0||l==='';
                      return <g key={n}>
                        <rect x={x} y={neg?474:474-h} width="23" height={h} fill="#00b0a5"/>
                        {l&&<text {...TxtProps} fontSize="9.800" textAnchor="middle" x={x+11.5} y={neg?474+o+7:474-h-6}>{l}</text>}
                        <text {...TxtProps} fontSize="10.500" textAnchor="end" transform={`translate(${x+15},499) rotate(-90)`}>{n}</text>
                      </g>;
                    })}
                    <text {...TxtProps} fontSize="10" textAnchor="middle" x="428" y="537">2020</text>
                  </Fill>
                </Card>

                <Card $x={633} $y={401} $w={411} $h={154}>
                  <CardTitle>Receita Operacional por Level 3 (Natureza)</CardTitle>
                  <SingleBars rows={natureza} labelW={88} h={16} gap={4} mt={10}/>
                </Card>

                <BankCard $x={56} $y={550} $w={181} $h={175}>
                  <BankTable>
                    <BankHead><span>Banco</span><span>Saldo</span></BankHead>
                    {banks.map((b,i)=>(
                      <BankRow key={b} $alt={i%2===1}>
                        <LogoCell>{bankLogos[i]}</LogoCell>
                        <Amount>{b}</Amount>
                      </BankRow>
                    ))}
                    <BankTotal><TotalName>Total</TotalName><TotalVal>3.439.403,91</TotalVal></BankTotal>
                  </BankTable>
                </BankCard>

                <Card $x={246} $y={562} $w={362} $h={168}>
                  <CardTitle>Saldo por Mês e Ano</CardTitle>
                  <Fill width="360" height="134" viewBox="247 595 360 134">
                    <path d="M306 643L306 639L341 613L376 637L411 638L446 608L481 631L516 619L543 643L587 643L587 649L551 650L543 643Z" fill="#0a8f85"/>
                    <polyline points={linePts.map(p=>p.join(',')).join(' ')} fill="none" stroke="#00ad9f" strokeWidth="2.200"/>
                    {[[341,633,'1,0 Mi'],[446,630,'1,2 Mi'],[481,642,'0,4 Mi'],[516,636,'0,8 Mi']].map(([x,y,t])=>
                      <text key={t} {...TxtProps} fontSize="9.800" textAnchor="middle" x={x} y={y}>{t}</text>)}
                    {lineLabels.map((n,i)=>
                      <text key={n} {...TxtProps} fontSize="10.500" textAnchor="end" transform={`translate(${273+i*35.1},663) rotate(-90)`}>{n}</text>)}
                    <text {...TxtProps} fontSize="10" textAnchor="middle" x="428" y="702">2020</text>
                  </Fill>
                </Card>

                <Card $x={633} $y={562} $w={411} $h={168}>
                  <CardTitle>Despesas Operacionais por Level 3 (Natureza)</CardTitle>
                  <SingleBars rows={despesas} labelW={89} h={13} gap={3.600} mt={16}/>
                  <Scroll $l={394} $t={34} $w={8} $r={0} $h={122}><Thumb $h={18}/></Scroll>
                </Card>
              </Canvas>
            </ReportCol>
            <FilterPane>
              <Chev d="l" s={12} c="#3b3a39"/>
              <FilterFunnel width="14" height="14" viewBox="0 0 14 14" fill="none" stroke="#6a6968"><path d="M13 1v11L7.500 8H1l5.500-3z"/></FilterFunnel>
              <FilterWord>Filtros</FilterWord>
            </FilterPane>
          </ReportRow>
          <TabBar>
            <Arrows>
              <svg width="6" height="10"><path d="M6 0v10L0 5z" fill="#c8c6c4"/></svg>
              <svg width="6" height="10"><path d="M0 0v10l6-5z" fill="#c8c6c4"/></svg>
            </Arrows>
            <PageTab>Página 1</PageTab>
            <AddTab><svg width="12" height="12"><path d="M6 0v12M0 6h12" stroke="#6b6a60" strokeWidth="2.800"/></svg></AddTab>
          </TabBar>
        </Center>

        <VizPane>
          <PaneHead $pl={12} $pr={10}>Visualizações<Chev d="r"/></PaneHead>
          <VizGrid>
            {VIZ.map((_,i)=><VizCell key={i}><VizIcon i={i}/></VizCell>)}
            <VizCell><More>···</More></VizCell>
          </VizGrid>
          <WellTabs>
            <WellTab $on $mr={0}><svg width="20" height="20" viewBox="0 0 20 20" fill="none" stroke="#252423" strokeDasharray="1.500 1"><path d="M0 1.500h20M0 4.500h20v5H0zM0 13h20v5H0z"/></svg></WellTab>
            <WellTab><svg width="18" height="20" viewBox="0 0 18 20" fill="none" stroke="#252423" strokeWidth="1.100"><path d="M1 1h14v3H1zM15 2.500h2v5H8v3M6.500 10.500h3v9h-3z"/></svg></WellTab>
          </WellTabs>
          <ValoresLabel>Valores</ValoresLabel>
          <DropZone $h={28} $pl={10}>Adicionar os campos de dados aqui</DropZone>
          <DrillTitle>Drill-through</DrillTitle>
          <SmallHead>Relatório cruzado</SmallHead>
          <ToggleRow $mt={13} $mb={19}>Desativado<Toggle/></ToggleRow>
          <SmallHead>Manter todos os filtros</SmallHead>
          <ToggleRow $mt={14} $mb={12}>Desativado<Toggle/></ToggleRow>
          <DropZone $h={26} $pl={8}>Adicionar os campos de drill-through aqui</DropZone>
        </VizPane>

        <FieldsPane>
          <PaneHead $pl={12} $pr={10}>Campos<Chev d="r"/></PaneHead>
          <SearchBox>
            <svg width="15" height="15" viewBox="0 0 15 15" fill="none" stroke="#3b3a39"><circle cx="9.500" cy="5.500" r="4.500"/><path d="M6.300 8.700L1 14"/></svg>
            Pesquisar
          </SearchBox>
          <PaneRule/>
          <FieldList>
            <TableRow><Chev d="d" c="#8a8886"/><TableGlyph/><RowName>Calendario</RowName></TableRow>
            <TableRow><Chev d="u" c="#605e5c"/><TableGlyph/><RowName>Medidas</RowName></TableRow>
            <Measures>
              {fields.map(f=>(
                <MeasureRow key={f}><Check/><CalcSlot>{f!=='Coluna 1'&&<CalcGlyph/>}</CalcSlot>{f}</MeasureRow>
              ))}
            </Measures>
            {['tab_banco','tab_centrocusto','tab_mov','tab_plano'].map(t=>(
              <TableRow key={t}><Chev d="d" c="#8a8886"/><TableGlyph/><RowName>{t}</RowName></TableRow>
            ))}
          </FieldList>
          <Watermark><WatermarkBig>Ativar o Windows</WatermarkBig>Acesse Configurações para ativar o Windows.</Watermark>
        </FieldsPane>
      </Main>

      <Status>Página 1 de 1</Status>
    </Page>
  );
}
